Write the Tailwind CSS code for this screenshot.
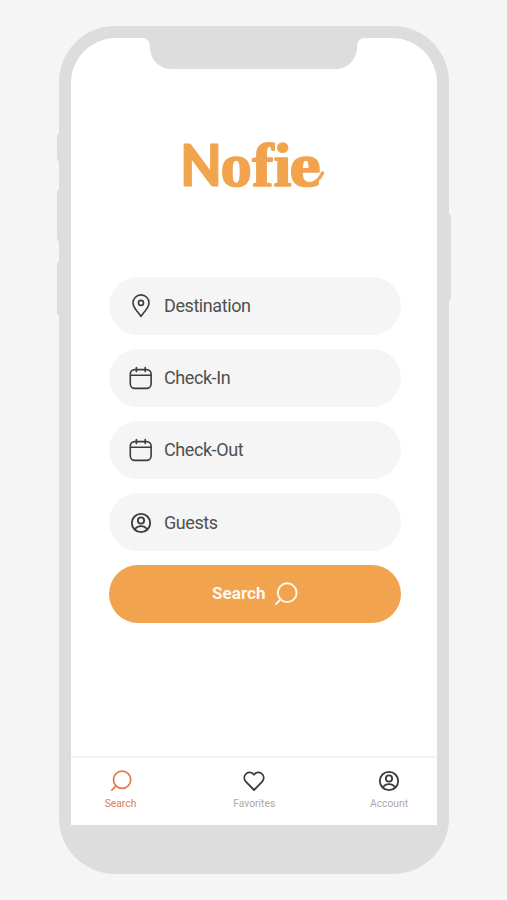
<!DOCTYPE html>
<html lang="en">
<head>
<meta charset="utf-8">
<title>Nofie</title>
<script src="https://cdn.jsdelivr.net/npm/@tailwindcss/browser@4"></script>
</head>
<body class="bg-[#f5f5f5] w-[507px] h-[900px] overflow-hidden font-['Roboto',sans-serif]">
<svg class="hidden">
  <symbol id="calendar" viewBox="0 0 24 24"><g fill="none" stroke="currentColor" stroke-width="1.6" stroke-linecap="round"><rect x="1.3" y="3.6" width="20.8" height="18.8" rx="4.4"/><path d="M1.8 9.3h20M7.4 1.6v4M16.2 1.6v4"/></g></symbol>
  <symbol id="person" viewBox="0 0 24 24"><g fill="none" stroke="currentColor" stroke-width="2"><circle cx="12" cy="12" r="10"/><circle cx="12" cy="9.2" r="3.4"/><path d="M5.2 19.1Q7.4 15.4 12 15.4T18.8 19.1"/></g></symbol>
  <symbol id="search" viewBox="0 0 24 24"><g fill="none" stroke="currentColor" stroke-width="1.9" stroke-linecap="round"><circle cx="13.2" cy="10.7" r="9.4"/><path d="M6.6 17.4L2 22"/></g></symbol>
</svg>
<div class="relative w-[390px] h-[848px] ml-[59px] mt-[26px] rounded-[56px] bg-[#ddd] pt-3 px-3">
  <i class="absolute -left-[2px] top-[107px] w-1 h-[29px] rounded-l-sm bg-[#ddd]"></i>
  <i class="absolute -left-[2px] top-[163px] w-1 h-[53px] rounded-l-sm bg-[#ddd]"></i>
  <i class="absolute -left-[2px] top-[235px] w-1 h-[55px] rounded-l-sm bg-[#ddd]"></i>
  <i class="absolute -right-[2px] top-[187px] w-1 h-[88px] rounded-r-sm bg-[#ddd]"></i>
  <main class="relative flex flex-col w-[366px] h-[787px] rounded-t-[45px] bg-white">
    <svg class="absolute left-[71px] top-0" width="224" height="31" viewBox="0 0 224 31" fill="#ddd"><path d="M0 0Q8 0 8 9C8 21 17 31 29 31H194C206 31 215 21 215 9Q215 0 223 0Z"/></svg>
    <h1 class="h-[239px] pt-[94px] pl-[109px]">
      <svg class="overflow-visible" width="150" height="66" viewBox="0 0 150 66" fill="#f1a34e" stroke="#f1a34e" stroke-linejoin="round" font-family="Liberation Serif" font-weight="700" font-size="61">
        <text transform="translate(0 54)" font-family="Lato" font-weight="900" font-size="57" textLength="42" lengthAdjust="spacingAndGlyphs" stroke-width="1">N</text>
        <text transform="translate(40.5 54) scale(1.03 1)" stroke-width="1.6">o</text>
        <text transform="translate(72 54) scale(1.06 1)" stroke-width="1.6">fi</text>
        <text transform="translate(109.5 54) scale(1.15 1)" stroke-width="1.6">e</text>
        <path d="M128 53Q139 50 142.500 41" fill="none" stroke-width="3.4" stroke-linecap="round"/>
      </svg>
    </h1>
    <div class="flex flex-col gap-[14.5px] pl-[37.5px] pr-[36.5px] text-[18px] tracking-[-0.42px] text-[#505050]">
      <div class="flex items-center h-[57.5px] rounded-full bg-[#f5f5f5] pl-5 gap-[11.5px]"><svg width="24" height="24" viewBox="0 0 24 24" fill="none" stroke="#3b3b3b" stroke-width="1.6" stroke-linejoin="round"><path d="M12 22.3C9.4 18.5 4 13.6 4 8.9a8 8 0 0 1 16 0C20 13.6 14.6 18.5 12 22.3Z"/><circle cx="12" cy="8.9" r="2.5"/></svg><span>Destination</span></div>
      <div class="flex items-center h-[57.5px] rounded-full bg-[#f5f5f5] pl-5 gap-[11.5px]"><svg width="24" height="24" class="text-[#3b3b3b]"><use href="#calendar"/></svg><span>Check-In</span></div>
      <div class="flex items-center h-[57.5px] rounded-full bg-[#f5f5f5] pl-5 gap-[11.5px]"><svg width="24" height="24" class="text-[#3b3b3b]"><use href="#calendar"/></svg><span>Check-Out</span></div>
      <div class="flex items-center h-[57.5px] rounded-full bg-[#f5f5f5] pl-[21.5px] gap-[12px] pt-[2px]"><svg width="22" height="22" class="text-[#3b3b3b]"><use href="#person"/></svg><span>Guests</span></div>
      <button class="flex items-center h-[57.5px] rounded-full bg-[#f1a34e] pl-[103.5px] gap-[8px] text-[#fff9ed] font-bold text-[17px] tracking-[0.05px]"><span>Search</span><svg width="24" height="24"><use href="#search"/></svg></button>
    </div>
    <nav class="mt-auto h-[69px] border-t-2 border-[#f3f3f3] flex justify-between pt-3 pl-[29.5px] pr-[27px] text-[10.3px] leading-[14px] text-[#aaa]">
      <a class="w-10 flex flex-col items-center gap-[5px] text-[#e37850]"><svg width="22" height="22"><use href="#search"/></svg><span>Search</span></a>
      <a class="w-12 flex flex-col items-center gap-[5px]"><svg width="22" height="22" viewBox="0 0 22 22" fill="none" stroke="#3b3b3b" stroke-width="1.8" stroke-linejoin="round"><path d="M11 20L2.6 11.3C-1.8 5.6 6.2-1.2 11 4.7C15.8-1.2 23.8 5.6 19.4 11.3Z"/></svg><span>Favorites</span></a>
      <a class="w-[42px] flex flex-col items-center gap-[5px]"><svg width="22" height="22" class="text-[#3b3b3b]"><use href="#person"/></svg><span>Account</span></a>
    </nav>
  </main>
</div>
</body>
</html>
